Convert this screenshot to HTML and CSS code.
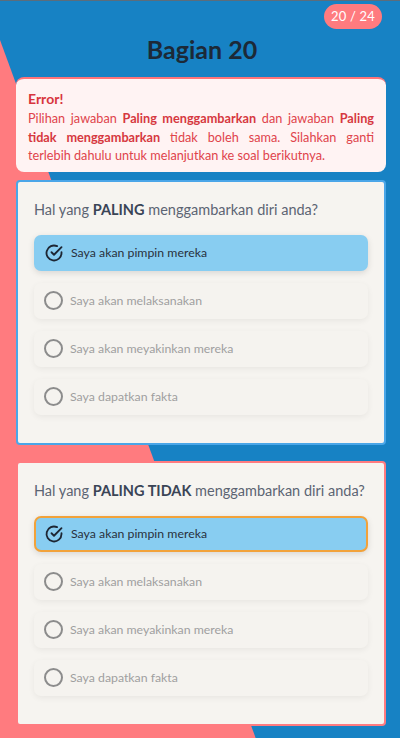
FILE: index.html
```html
<!DOCTYPE html>
<html lang="id">
<head>
<meta charset="utf-8">
<title>Bagian 20</title>
<link rel="stylesheet" href="styles.css">
</head>
<body>
<div class="bg-shape"></div>
<div class="page">
  <div class="badge-row"><span class="badge">20 / 24</span></div>
  <h1 class="title">Bagian 20</h1>

  <div class="error">
    <div class="error-title">Error!</div>
    <p class="error-text">Pilihan jawaban <b>Paling menggambarkan</b> dan jawaban <b>Paling tidak menggambarkan</b> tidak boleh sama. Silahkan ganti terlebih dahulu untuk melanjutkan ke soal berikutnya.</p>
  </div>

  <section class="card card-most">
    <p class="question">Hal yang <b>PALING</b> menggambarkan diri anda?</p>
    <ul class="options">
      <li class="option selected">
        <svg class="icon" viewBox="0 0 24 24"><path d="M21 11.1V12a9 9 0 1 1-5.3-8.2" fill="none" stroke="#1d2633" stroke-width="2.2" stroke-linecap="round" stroke-linejoin="round"/><path d="M21 5 12 14.1l-3-3" fill="none" stroke="#1d2633" stroke-width="2.2" stroke-linecap="round" stroke-linejoin="round"/></svg>
        <span>Saya akan pimpin mereka</span>
      </li>
      <li class="option"><span class="radio"></span><span>Saya akan melaksanakan</span></li>
      <li class="option"><span class="radio"></span><span>Saya akan meyakinkan mereka</span></li>
      <li class="option"><span class="radio"></span><span>Saya dapatkan fakta</span></li>
    </ul>
  </section>

  <section class="card card-least">
    <p class="question">Hal yang <b>PALING TIDAK</b> menggambarkan diri anda?</p>
    <ul class="options">
      <li class="option selected conflict">
        <svg class="icon" viewBox="0 0 24 24"><path d="M21 11.1V12a9 9 0 1 1-5.3-8.2" fill="none" stroke="#1d2633" stroke-width="2.2" stroke-linecap="round" stroke-linejoin="round"/><path d="M21 5 12 14.1l-3-3" fill="none" stroke="#1d2633" stroke-width="2.2" stroke-linecap="round" stroke-linejoin="round"/></svg>
        <span>Saya akan pimpin mereka</span>
      </li>
      <li class="option"><span class="radio"></span><span>Saya akan melaksanakan</span></li>
      <li class="option"><span class="radio"></span><span>Saya akan meyakinkan mereka</span></li>
      <li class="option"><span class="radio"></span><span>Saya dapatkan fakta</span></li>
    </ul>
  </section>
</div>
</body>
</html>
```

FILE: styles.css
```css
* { box-sizing: border-box; }

html, body {
  margin: 0;
  padding: 0;
}

body {
  background: #1782c4;
  border-top: 1px solid #5b6d7c;
  font-family: Lato, "Noto Sans", sans-serif;
  min-height: 738px;
  position: relative;
  overflow: hidden;
}

.bg-shape {
  position: absolute;
  left: 0;
  top: 0;
  width: 400px;
  height: 738px;
  background: #ff7b7f;
  clip-path: polygon(0 39px, 256px 738px, 0 738px);
}

.page {
  position: relative;
  padding: 3px 14px 0 16px;
}

.badge-row {
  display: flex;
  justify-content: flex-end;
  padding-right: 4px;
}

.badge {
  background: #ff7b7f;
  color: #fff;
  font-size: 13px;
  line-height: 25px;
  height: 25px;
  padding: 0 7px;
  border-radius: 13px;
  letter-spacing: 0.2px;
}

.title {
  margin: 5px 0 0;
  text-align: center;
  font-size: 25px;
  font-weight: 700;
  color: #1c2937;
  line-height: 30px;
  padding-left: 2px;
}

.error {
  margin-top: 13px;
  background: #fff3f3;
  border-top: 2px solid #ff7479;
  border-radius: 8px;
  padding: 11px 12px 7px 12px;
  color: #e0434b;
}

.error-title {
  font-size: 14px;
  font-weight: 700;
  color: #d8353d;
  line-height: 18px;
}

.error-text {
  margin: 1px 0 0;
  font-size: 12.7px;
  line-height: 18.5px;
  text-align: justify;
}

.error-text b { font-weight: 700; color: #d63840; }

.card {
  margin-top: 8px;
  background: #f6f4f0;
  border: 2px solid #4aa6e8;
  border-radius: 4px;
  padding: 17px 16px 28px 16px;
}

.card-least {
  margin-top: 16px;
  border-color: #ff7b80;
}

.question {
  margin: 0 0 14px;
  font-size: 14.5px;
  line-height: 22px;
  color: #5c6473;
}

.question b { font-weight: 700; color: #3a4456; }

.options {
  list-style: none;
  margin: 0;
  padding: 0;
  display: flex;
  flex-direction: column;
  gap: 12px;
}

.option {
  height: 36px;
  display: flex;
  align-items: center;
  gap: 7px;
  padding: 0 10px;
  background: #f5f3ef;
  border-radius: 7px;
  box-shadow: 0 2px 6px rgba(0, 0, 0, 0.06);
  font-size: 12.3px;
  color: #9f9f9f;
}

.option.selected {
  background: #88cdf1;
  color: #28313d;
  box-shadow: 0 2px 6px rgba(0, 0, 0, 0.12);
}

.option.conflict {
  border: 2px solid #f2a23a;
  padding: 0 8px;
}

.icon {
  width: 20px;
  height: 20px;
  flex: none;
}

.radio {
  width: 19px;
  height: 19px;
  border: 2px solid #8c8c8c;
  border-radius: 50%;
  flex: none;
}
```
